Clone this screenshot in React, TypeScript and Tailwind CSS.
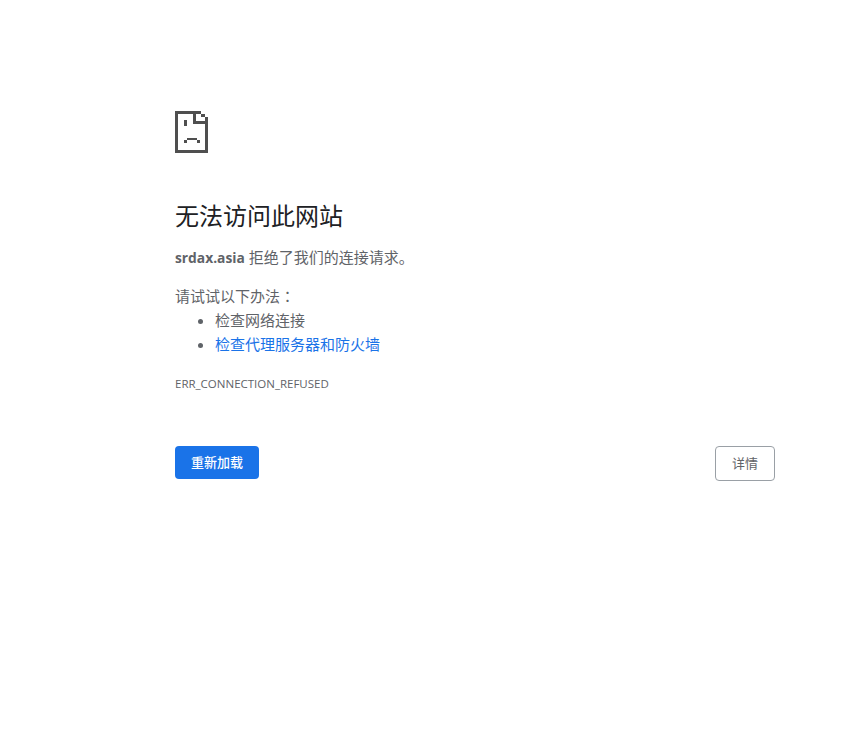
const font = "font-['Open_Sans','Noto_Sans_CJK_SC',sans-serif]";

function SadPage() {
  return (
    <svg width="33" height="42" viewBox="0 0 33 42" fill="#4f4f4f" shapeRendering="crispEdges">
      <path d="M0 0h26v3H3v36h27V6h3v36H0z" />
      <path d="M18 3h3v7h9v3H18z" />
      <path d="M26 3h4v3h-4z" />
      <path d="M9 9h3v6H9z" />
      <path d="M12 27h10v2H12zM9 29h3v3H9zM22 29h3v3h-3z" />
    </svg>
  );
}

export default function App() {
  return (
    <div className={`min-h-[743px] bg-white pt-[111px] pl-[175px] text-[#5f6368] ${font}`}>
      <div className="w-[600px]">
        <SadPage />

        <h1 className="mt-[45px] text-[24px] leading-[36px] font-normal text-[#202124]">无法访问此网站</h1>

        <p className="mt-[11px] text-[15px] leading-[24px]">
          <span className="text-[13.8px] font-bold">srdax.asia</span> 拒绝了我们的连接请求。
        </p>

        <p className="mt-[14px] text-[15px] leading-[24px]">
          请试试以下办法<span className="font-['Noto_Sans_CJK_TC',sans-serif]">：</span>
        </p>
        <ul className="pl-10 text-[15px] list-disc">
          <li className="leading-[24px]">检查网络连接</li>
          <li className="leading-[24px]">
            <a className="text-[#1a73e8]">检查代理服务器和防火墙</a>
          </li>
        </ul>

        <div className="mt-[20px] text-[11.5px] leading-[16px]">ERR_CONNECTION_REFUSED</div>

        <div className="mt-[54px] flex items-start justify-between">
          <button className="h-[33px] w-[84px] rounded-[4px] bg-[#1a73e8] text-[13px] font-medium text-white">
            重新加载
          </button>
          <button className="h-[35px] w-[60px] rounded-[4px] border border-[#9aa0a6] bg-white text-[13px] text-[#5f6368]">
            详情
          </button>
        </div>
      </div>
    </div>
  );
}
